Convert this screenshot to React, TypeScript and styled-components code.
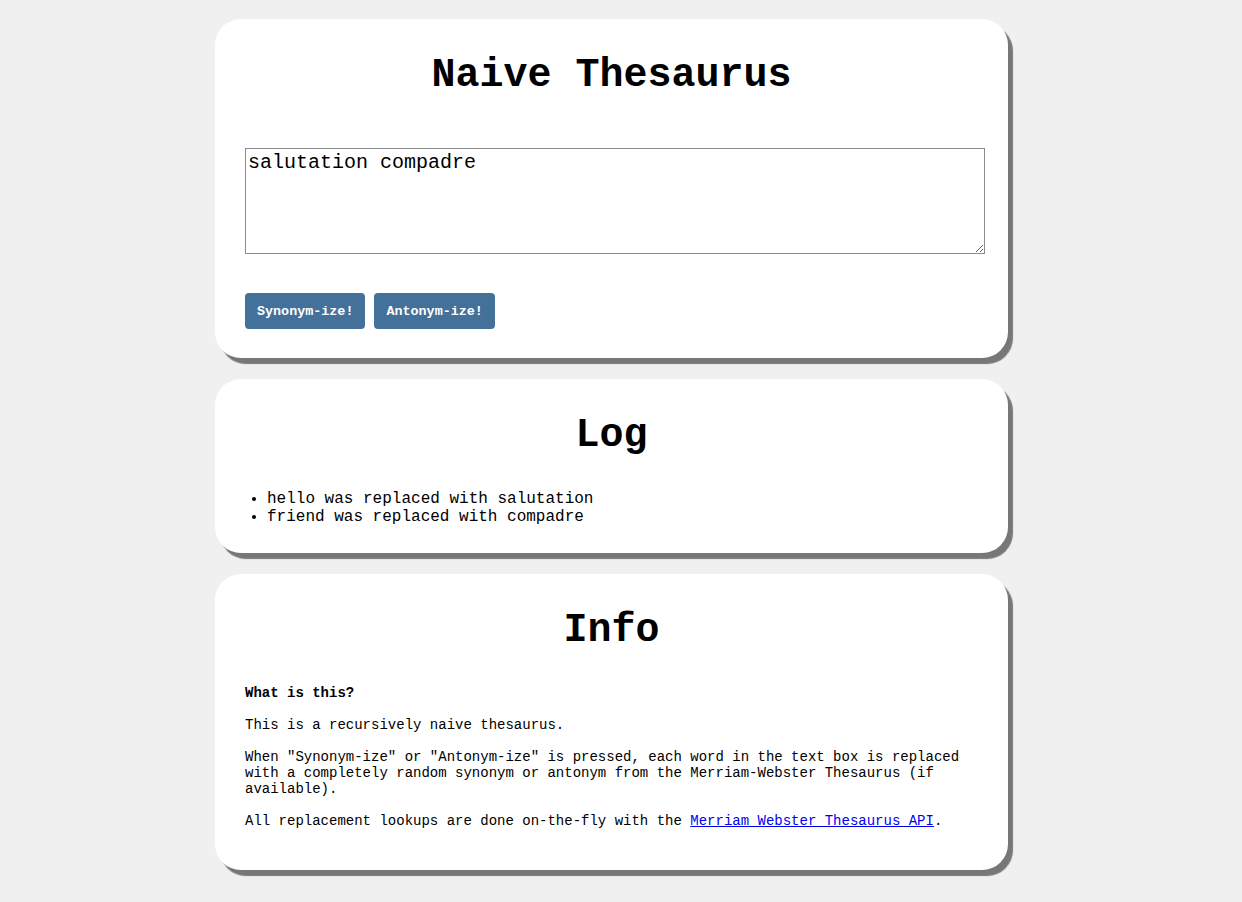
import React from "react";
import styled, { createGlobalStyle } from "styled-components";

const GlobalStyle = createGlobalStyle`
  html, body {
    margin: 0;
    padding: 0;
    background: #f0f0f0;
    font-family: "Liberation Mono", "Courier New", monospace;
    color: #000;
  }
`;

const Page = styled.div`
  display: flex;
  flex-direction: column;
  gap: 21px;
  padding: 19px 0 24px 215px;
`;

const Card = styled.section<{ $bottom: number }>`
  width: 793px;
  box-sizing: border-box;
  background: #fff;
  border-radius: 26px;
  box-shadow: 5px 6px 1px #777;
  padding: 34px 30px ${(p) => p.$bottom}px 30px;
`;

const Title = styled.h1<{ $gap: number }>`
  margin: 0 0 ${(p) => p.$gap}px;
  font-size: 40px;
  line-height: 45px;
  font-weight: bold;
  text-align: center;
`;

const TextBox = styled.textarea`
  display: block;
  width: 740px;
  height: 106px;
  box-sizing: border-box;
  margin: 0;
  padding: 2px;
  border: 1px solid #8a8a8a;
  font-family: "Liberation Mono", "Courier New", monospace;
  font-size: 20px;
  line-height: 23px;
  resize: both;
  outline: none;
`;

const ButtonRow = styled.div`
  display: flex;
  gap: 9px;
  margin-top: 39px;
`;

const ActionButton = styled.button`
  height: 36px;
  padding: 0 12px;
  border: none;
  border-radius: 4px;
  background: #44719a;
  color: #fff;
  font-family: "Liberation Mono", "Courier New", monospace;
  font-size: 13.4px;
  font-weight: bold;
  cursor: pointer;
`;

const LogList = styled.ul`
  margin: 0;
  padding-left: 22px;
  font-size: 16px;
  line-height: 18px;
`;

const InfoText = styled.div`
  font-size: 14px;
  line-height: 16px;
  p {
    margin: 0 0 16px;
  }
  p:last-child {
    margin-bottom: 0;
  }
  a {
    color: #0000ee;
  }
`;

export default function App() {
  return (
    <>
      <GlobalStyle />
      <Page>
        <Card $bottom={29}>
          <Title $gap={50}>Naive Thesaurus</Title>
          <TextBox defaultValue="salutation compadre" />
          <ButtonRow>
            <ActionButton>Synonym-ize!</ActionButton>
            <ActionButton>Antonym-ize!</ActionButton>
          </ButtonRow>
        </Card>
        <Card $bottom={27}>
          <Title $gap={32}>Log</Title>
          <LogList>
            <li>hello was replaced with salutation</li>
            <li>friend was replaced with compadre</li>
          </LogList>
        </Card>
        <Card $bottom={41}>
          <Title $gap={32}>Info</Title>
          <InfoText>
            <p>
              <b>What is this?</b>
            </p>
            <p>This is a recursively naive thesaurus.</p>
            <p>
              When "Synonym-ize" or "Antonym-ize" is pressed, each word in the text box is replaced
              with a completely random synonym or antonym from the Merriam-Webster Thesaurus (if
              available).
            </p>
            <p>
              All replacement lookups are done on-the-fly with the{" "}
              <a href="#">Merriam Webster Thesaurus API</a>.
            </p>
          </InfoText>
        </Card>
      </Page>
    </>
  );
}
